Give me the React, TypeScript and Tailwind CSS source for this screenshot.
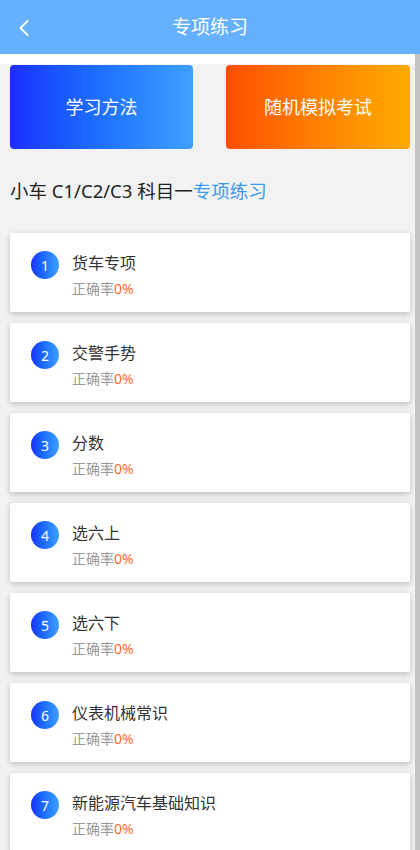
import { ChevronLeft } from 'lucide-react';

const topics = [
  '货车专项',
  '交警手势',
  '分数',
  '选六上',
  '选六下',
  '仪表机械常识',
  '新能源汽车基础知识',
];

export default function App() {
  return (
    <div
      className="relative w-[420px] h-[850px] overflow-hidden bg-[#f2f2f2]"
      style={{ fontFamily: '"Noto Sans", "Noto Sans CJK SC", sans-serif' }}
    >
      {/* Header */}
      <div className="relative h-[54px] bg-[#66b1ff] flex items-center justify-center">
        <ChevronLeft className="absolute left-[10px] top-[14px] w-[28px] h-[28px] text-white" strokeWidth={1.6} />
        <span className="text-white text-[19px]">专项练习</span>
      </div>

      <div className="h-[10px] w-[415px] bg-white" />

      {/* Actions */}
      <div className="flex justify-between px-[10px] pt-[1px]">
        <button className="w-[183px] h-[84px] rounded-[4px] bg-gradient-to-r from-[#1f2bff] to-[#40a0ff] text-white text-[18px]">
          学习方法
        </button>
        <button className="w-[184px] h-[84px] rounded-[4px] bg-gradient-to-r from-[#ff4c00] to-[#ffab00] text-white text-[18px]">
          随机模拟考试
        </button>
      </div>

      <h2 className="mt-[29px] px-[10px] text-[18.5px] leading-[26px] text-[#222]">
        小车 C1/C2/C3 科目一<span className="text-[#3a9af2]">专项练习</span>
      </h2>

      {/* Topic list */}
      <div className="mt-[29px] px-[10px] flex flex-col gap-[11px]">
        {topics.map((title, i) => (
          <div
            key={title}
            className="h-[79px] shrink-0 bg-white rounded-[2px] shadow-[0_2px_6px_rgba(0,0,0,0.22)] px-[21px] pt-[16px] flex"
          >
            <div className="mt-[2px] w-[28px] h-[28px] rounded-full bg-gradient-to-r from-[#1f2bff] to-[#40a0ff] flex items-center justify-center text-white text-[14px]">
              {i + 1}
            </div>
            <div className="ml-[13px]">
              <div className="text-[16px] leading-[28px] text-[#333]">{title}</div>
              <div className="mt-[2px] text-[14px] leading-[20px] text-[#999]">
                正确率<span className="text-[#ff6a2b]">0%</span>
              </div>
            </div>
          </div>
        ))}
      </div>

      {/* scrollbar */}
      <div className="absolute right-0 top-[54px] bottom-0 w-[5px] bg-[#c4c4c4]" />
    </div>
  );
}
